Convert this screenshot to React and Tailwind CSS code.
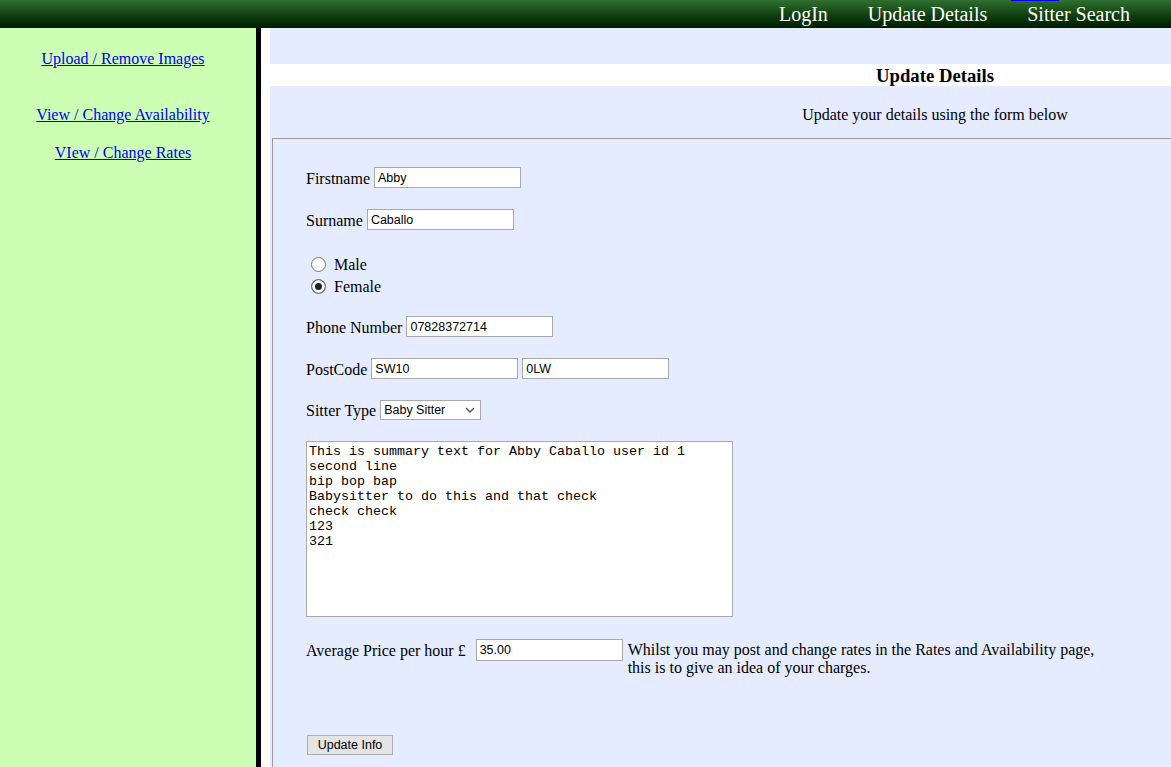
import React from "react";

const serif = { fontFamily: '"Liberation Serif", "Times New Roman", serif' };

function TextBox({ value, className = "" }) {
  return (
    <input
      type="text"
      defaultValue={value}
      className={
        "w-[147px] h-[21px] border border-[#a9a9a9] bg-white px-[3px] text-[12.5px] text-black outline-none align-middle font-['Liberation_Sans',Arial,sans-serif] " +
        className
      }
    />
  );
}

export default function App() {
  const summary =
    "This is summary text for Abby Caballo user id 1\nsecond line\nbip bop bap\nBabysitter to do this and that check\ncheck check\n123\n321";

  return (
    <div
      className="relative w-[1171px] h-[767px] overflow-hidden bg-white text-black text-[16px]"
      style={serif}
    >
      <div className="absolute left-[1011px] top-0 w-[48px] h-[1px] bg-[#0000ee]" />
      <header className="h-[28px] flex items-center justify-end gap-[40px] pr-[41px] pt-[1px] bg-gradient-to-b from-[#2f7030] to-[#001c00] text-white text-[20px] leading-[27px]">
        <a href="#">LogIn</a>
        <a href="#">Update Details</a>
        <a href="#">Sitter Search</a>
      </header>

      <div className="flex h-[739px]">
        <aside className="w-[261px] shrink-0 bg-[#ccffb3] border-r-[5px] border-black pr-[10px] pt-[22px] text-center leading-[18px]">
          <div>
            <a href="#" className="text-[#0000ee] underline">
              Upload / Remove Images
            </a>
          </div>
          <div className="mt-[38px]">
            <a href="#" className="text-[#0000ee] underline">
              View / Change Availability
            </a>
          </div>
          <div className="mt-[20px]">
            <a href="#" className="text-[#0000ee] underline">
              VIew / Change Rates
            </a>
          </div>
        </aside>

        <main className="ml-[9px] w-[1330px] shrink-0">
          <div className="h-[36px] bg-[#e6ecff]" />
          <h3 className="h-[22px] pt-[1px] bg-white text-center font-bold text-[18.72px] leading-[22px]">
            Update Details
          </h3>
          <div className="bg-[#e6ecff]">
            <p className="h-[52px] pt-[20px] leading-[18px] text-center">
              Update your details using the form below
            </p>
            <form className="h-[700px] ml-[2px] border border-[#999999] pl-[33px] pt-[28px] leading-[18px]">
              <div className="h-[21px] flex items-center">
                <label className="pt-[2px]">Firstname&nbsp;</label>
                <TextBox value="Abby" />
              </div>
              <div className="mt-[21px] h-[21px] flex items-center">
                <label className="pt-[2px]">Surname&nbsp;</label>
                <TextBox value="Caballo" />
              </div>
              <div className="mt-[23px]">
                <label className="h-[22px] flex items-center">
                  <input
                    type="radio"
                    name="gender"
                    className="appearance-none w-[15px] h-[15px] ml-[5px] mr-[8px] rounded-full border border-[#7a7a7a] bg-white"
                  />
                  <span className="pt-[2px]">Male</span>
                </label>
                <label className="h-[22px] flex items-center">
                  <input
                    type="radio"
                    name="gender"
                    defaultChecked
                    className="appearance-none w-[15px] h-[15px] ml-[5px] mr-[8px] rounded-full border border-[#7a7a7a] bg-white checked:bg-[#222] checked:shadow-[inset_0_0_0_3px_#fff]"
                  />
                  <span className="pt-[2px]">Female</span>
                </label>
              </div>
              <div className="mt-[19px] h-[21px] flex items-center">
                <label className="pt-[2px]">Phone Number&nbsp;</label>
                <TextBox value="07828372714" />
              </div>
              <div className="mt-[21px] h-[21px] flex items-center">
                <label className="pt-[2px]">PostCode&nbsp;</label>
                <TextBox value="SW10" />
                <TextBox value="0LW" className="ml-[4px]" />
              </div>
              <div className="mt-[21px] h-[20px] flex items-center">
                <label className="pt-[2px]">Sitter Type&nbsp;</label>
                <div className="relative">
                  <select className="appearance-none w-[101px] h-[20px] border border-[#a9a9a9] bg-white pl-[3px] text-[12.5px] outline-none font-['Liberation_Sans',Arial,sans-serif]">
                    <option>Baby Sitter</option>
                    <option>Nanny</option>
                  </select>
                  <svg
                    className="absolute right-[6px] top-[7px] pointer-events-none"
                    width="10"
                    height="6"
                    viewBox="0 0 10 6"
                  >
                    <path d="M1 1l4 4 4-4" fill="none" stroke="#555" strokeWidth="1.4" />
                  </svg>
                </div>
              </div>
              <textarea
                defaultValue={summary}
                className="block mt-[21px] w-[427px] h-[176px] border border-[#a9a9a9] bg-white px-[2px] py-[2px] text-[13.33px] leading-[15px] text-black resize-none outline-none font-['Liberation_Mono','Courier_New',monospace]"
              />
              <div className="mt-[22px] flex items-start">
                <label className="h-[22px] pt-[2px] flex items-center">
                  Average Price per hour £
                </label>
                <TextBox value="35.00" className="h-[22px] ml-[10px]" />
                <p className="ml-[5px] mt-[2px] w-[475px] leading-[18px]">
                  Whilst you may post and change rates in the Rates and Availability page,
                  this is to give an idea of your charges.
                </p>
              </div>
              <button
                type="button"
                className="mt-[58px] ml-[1px] w-[86px] h-[20px] border border-[#adadad] bg-[#e4e4e4] text-[12.5px] leading-[18px] font-['Liberation_Sans',Arial,sans-serif]"
              >
                Update Info
              </button>
            </form>
          </div>
        </main>
      </div>
    </div>
  );
}
